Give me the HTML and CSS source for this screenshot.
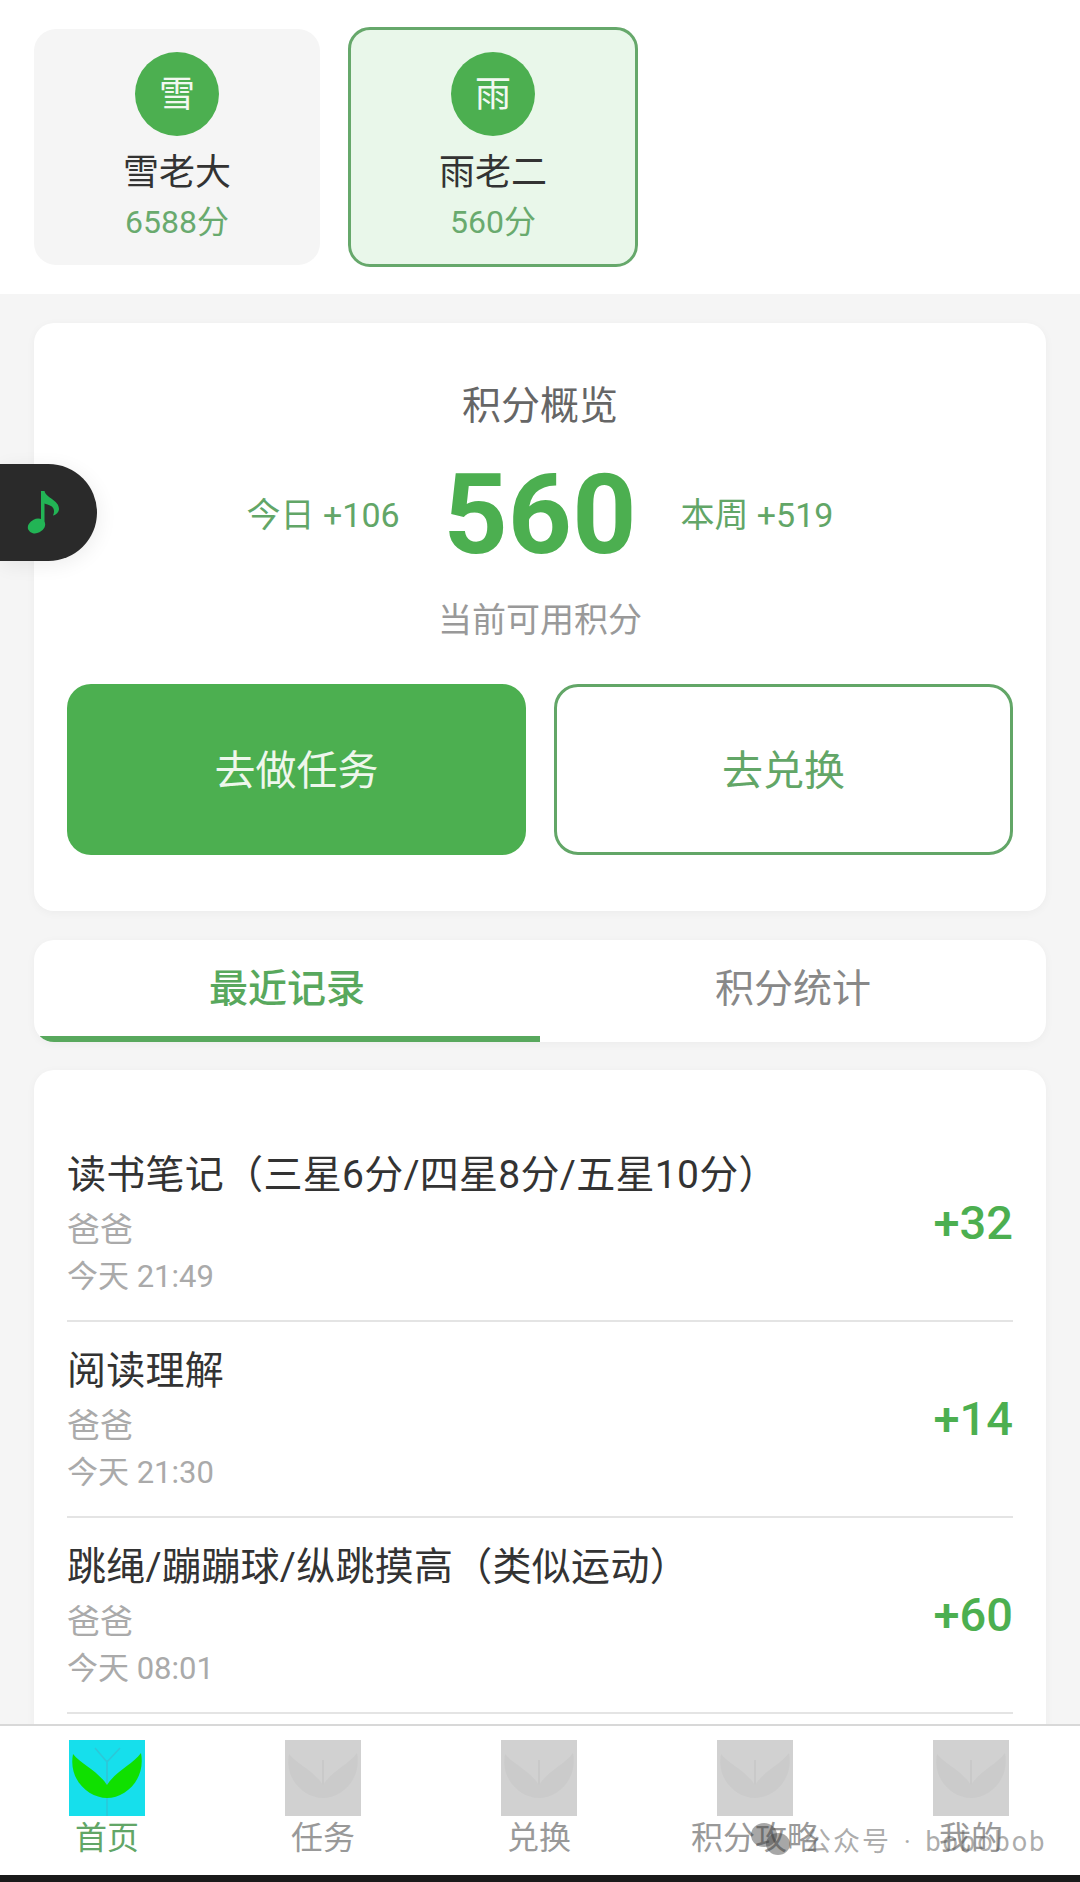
FILE: index.html
```html
<!DOCTYPE html>
<html lang="zh">
<head>
<meta charset="utf-8">
<title>积分概览</title>
<link rel="stylesheet" href="styles.css">
</head>
<body>
<svg class="defs" width="0" height="0" aria-hidden="true">
  <symbol id="leaf" viewBox="0 0 76 76">
    <path class="leaf-fork" d="M38 76V22M38 22L26 8M38 22L51 8" fill="none" stroke-width="1.5"/>
    <path class="leaf-stem" d="M38 20V46" fill="none" stroke-width="1.5"/>
    <path class="leaf-shape" d="M4 14C12 24 29 31 38 45C47 31 64 24 72 13C77 40 56 58 38 58C20 58 -1 40 4 14Z"/>
  </symbol>
</svg>
<div class="page">
  <section class="members">
    <div class="member">
      <div class="avatar">雪</div>
      <div class="member-name">雪老大</div>
      <div class="member-score">6588分</div>
    </div>
    <div class="member member-active">
      <div class="avatar">雨</div>
      <div class="member-name">雨老二</div>
      <div class="member-score">560分</div>
    </div>
  </section>

  <main class="main">
    <section class="card overview">
      <h2 class="overview-title">积分概览</h2>
      <div class="stats">
        <span class="stat">今日 +106</span>
        <span class="total">560</span>
        <span class="stat">本周 +519</span>
      </div>
      <div class="overview-sub">当前可用积分</div>
      <div class="actions">
        <div class="btn btn-solid">去做任务</div>
        <div class="btn btn-outline">去兑换</div>
      </div>
    </section>

    <div class="card tabs">
      <div class="tab tab-active">最近记录</div>
      <div class="tab">积分统计</div>
    </div>

    <section class="card records">
      <div class="record">
        <div class="record-info">
          <div class="record-title">读书笔记（三星6分/四星8分/五星10分）</div>
          <div class="record-who">爸爸</div>
          <div class="record-time">今天 21:49</div>
        </div>
        <div class="record-value">+32</div>
      </div>
      <div class="record">
        <div class="record-info">
          <div class="record-title">阅读理解</div>
          <div class="record-who">爸爸</div>
          <div class="record-time">今天 21:30</div>
        </div>
        <div class="record-value">+14</div>
      </div>
      <div class="record">
        <div class="record-info">
          <div class="record-title">跳绳/蹦蹦球/纵跳摸高（类似运动）</div>
          <div class="record-who">爸爸</div>
          <div class="record-time">今天 08:01</div>
        </div>
        <div class="record-value">+60</div>
      </div>
    </section>
  </main>

  <nav class="nav">
    <div class="nav-item nav-active">
      <svg class="nav-icon"><use href="#leaf"/></svg>
      <span class="nav-label">首页</span>
    </div>
    <div class="nav-item">
      <svg class="nav-icon"><use href="#leaf"/></svg>
      <span class="nav-label">任务</span>
    </div>
    <div class="nav-item">
      <svg class="nav-icon"><use href="#leaf"/></svg>
      <span class="nav-label">兑换</span>
    </div>
    <div class="nav-item">
      <svg class="nav-icon"><use href="#leaf"/></svg>
      <span class="nav-label">积分攻略</span>
    </div>
    <div class="nav-item">
      <svg class="nav-icon"><use href="#leaf"/></svg>
      <span class="nav-label">我的</span>
    </div>
  </nav>
  <div class="system-bar"></div>

  <div class="music">
    <svg class="music-note" viewBox="0 0 32 44">
      <ellipse cx="9.500" cy="35" rx="9" ry="7" transform="rotate(-25 9.500 35)"/>
      <path d="M14 0L17.500 0C19 7 32 9 32 18C32 21 29 24 26 24.500C28 20 27 17 24 15C22 14 19 13 17.500 12.500L17.500 35L14 35Z"/>
    </svg>
  </div>

  <div class="watermark">
    <svg class="watermark-logo" viewBox="0 0 42 34">
      <ellipse cx="14" cy="13" rx="13" ry="12"/>
      <ellipse cx="28" cy="22" rx="12" ry="11"/>
    </svg>
    <span class="watermark-text">公众号 · bobobob</span>
  </div>
</div>
</body>
</html>
```

FILE: styles.css
```css
* {
  box-sizing: border-box;
}

html,
body {
  margin: 0;
  padding: 0;
}

body {
  font-family: Roboto, "Noto Sans CJK SC", sans-serif;
  color: #333;
  background: #f5f5f5;
}

.defs {
  position: absolute;
}

.page {
  position: relative;
  display: flex;
  flex-direction: column;
  width: 1080px;
  height: 1882px;
  overflow: hidden;
  background: #f5f5f5;
}

/* members */
.members {
  flex: none;
  display: flex;
  align-items: center;
  gap: 28px;
  height: 294px;
  padding: 0 34px;
  background: #fff;
}

.member {
  display: flex;
  flex-direction: column;
  align-items: center;
  width: 286px;
  height: 236px;
  padding-top: 23px;
  border-radius: 22px;
  background: #f5f5f5;
}

.member-active {
  width: 290px;
  height: 240px;
  padding-top: 22px;
  border: 3px solid #66a86b;
  background: #e9f7ea;
}

.avatar {
  display: flex;
  align-items: center;
  justify-content: center;
  width: 84px;
  height: 84px;
  padding-top: 2px;
  border-radius: 50%;
  background: #4caf50;
  color: #f2f8f0;
  font-size: 36px;
  line-height: 1;
}

.member-name {
  margin-top: 12px;
  font-size: 36px;
  line-height: 50px;
  color: #333;
}

.member-score {
  margin-top: 4px;
  font-size: 32px;
  line-height: 40px;
  color: #69aa6e;
}

/* main */
.main {
  flex: 1;
  min-height: 0;
  display: flex;
  flex-direction: column;
  padding: 29px 34px 0;
  overflow: hidden;
}

.card {
  flex: none;
  border-radius: 20px;
  background: #fff;
  box-shadow: 0 2px 10px rgba(0, 0, 0, 0.04);
}

.overview {
  height: 588px;
  padding: 56px 33px 0;
}

.overview-title {
  margin: 0;
  font-size: 39px;
  font-weight: 400;
  line-height: 54px;
  text-align: center;
  color: #666;
}

.stats {
  display: flex;
  align-items: center;
  justify-content: center;
  gap: 44px;
  height: 140px;
  margin-top: 12px;
}

.stat {
  font-size: 34px;
  line-height: 44px;
  color: #62a667;
}

.total {
  font-size: 112px;
  font-weight: 700;
  line-height: 140px;
  color: #4caf50;
}

.overview-sub {
  margin-top: 11px;
  font-size: 34px;
  line-height: 48px;
  text-align: center;
  color: #999;
}

.actions {
  display: grid;
  grid-template-columns: 1fr 1fr;
  gap: 28px;
  margin-top: 40px;
}

.btn {
  display: flex;
  align-items: center;
  justify-content: center;
  height: 171px;
  padding-bottom: 5px;
  border-radius: 24px;
  font-size: 41px;
}

.btn-solid {
  background: #4caf50;
  color: #eef7ec;
}

.btn-outline {
  border: 3px solid #62a667;
  background: #fff;
  color: #62a667;
}

/* tabs */
.tabs {
  display: flex;
  height: 102px;
  margin-top: 29px;
  overflow: hidden;
}

.tab {
  position: relative;
  flex: 1;
  display: flex;
  align-items: center;
  justify-content: center;
  padding-bottom: 13px;
  font-size: 39px;
  color: #888;
}

.tab-active {
  color: #58a85d;
  font-weight: 500;
}

.tab-active::after {
  content: "";
  position: absolute;
  left: 6px;
  right: 0;
  bottom: 0;
  height: 6px;
  border-bottom-left-radius: 8px;
  background: #58a85d;
}

/* records */
.records {
  height: 800px;
  margin-top: 28px;
  padding: 56px 33px 0;
}

.record {
  display: flex;
  align-items: center;
  justify-content: space-between;
  height: 196px;
  padding: 0 0 2px;
  border-bottom: 2px solid #e4e4e4;
}

.record-info {
  min-width: 0;
}

.record-title {
  font-size: 39px;
  letter-spacing: 0.28px;
  line-height: 54px;
  color: #333;
  white-space: nowrap;
}

.record-who {
  margin-top: 1px;
  font-size: 33px;
  line-height: 54px;
  color: #aaa;
}

.record-time {
  font-size: 31px;
  line-height: 40px;
  color: #aaa;
}

.record-value {
  font-size: 47px;
  font-weight: 500;
  color: #4caf50;
}

/* bottom nav */
.nav {
  --leaf: #cbcbcb;
  --stem: #c6c6c6;
  --fork: transparent;
  flex: none;
  position: relative;
  display: grid;
  grid-template-columns: repeat(5, 216px);
  height: 151px;
  border-top: 2px solid #d8d8d8;
  background: #fff;
}

.nav-item {
  display: flex;
  flex-direction: column;
  align-items: center;
  padding-top: 14px;
  margin-left: -2px;
}

.nav-icon {
  flex: none;
  width: 76px;
  height: 76px;
  background: #d1d1d1;
}

.leaf-shape {
  fill: var(--leaf);
}

.leaf-stem {
  stroke: var(--stem);
}

.leaf-fork {
  stroke: var(--fork);
}

.nav-active {
  --leaf: #10e000;
  --stem: #2cc8d8;
  --fork: #2cc8d8;
}

.nav-active .nav-icon {
  background: #16dfec;
}

.nav-label {
  margin-top: 1px;
  font-size: 32px;
  line-height: 42px;
  color: #999;
  white-space: nowrap;
}

.nav-active .nav-label {
  color: #62a667;
}

.system-bar {
  flex: none;
  height: 7px;
  background: #1a1a1a;
}

/* overlays */
.music {
  position: absolute;
  left: 0;
  top: 464px;
  display: flex;
  align-items: center;
  width: 97px;
  height: 97px;
  padding-left: 27px;
  border-radius: 0 49px 49px 0;
  background: #2a2a2a;
  box-shadow: 2px 4px 20px rgba(0, 0, 0, 0.07);
}

.music-note {
  width: 32px;
  height: 44px;
  fill: #22b455;
}

.watermark {
  position: absolute;
  left: 750px;
  top: 1821px;
  display: flex;
  align-items: center;
  gap: 12px;
  height: 36px;
  color: rgba(90, 90, 90, 0.5);
  white-space: nowrap;
  pointer-events: none;
}

.watermark-logo {
  width: 42px;
  height: 34px;
  fill: rgba(60, 60, 60, 0.45);
}

.watermark-text {
  font-size: 27px;
  letter-spacing: 2px;
  word-spacing: 4px;
}
```
